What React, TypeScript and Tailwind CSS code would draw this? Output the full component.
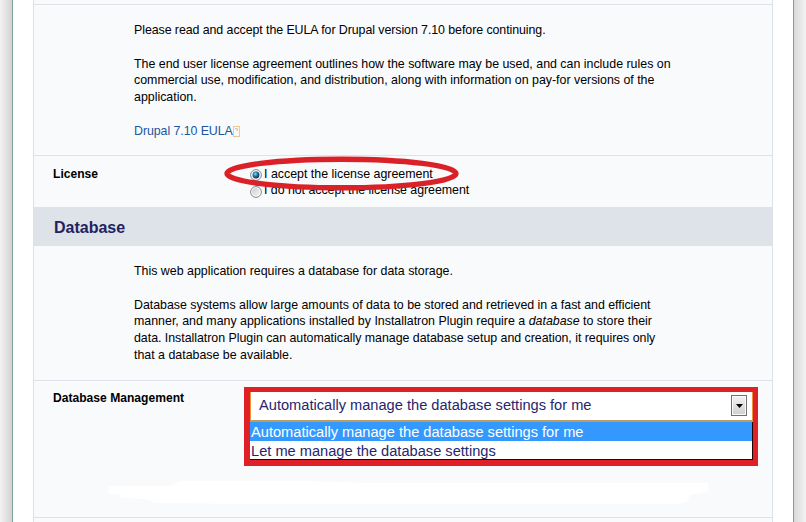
import type { ReactNode } from "react";

type TextLine = {
  text: ReactNode;
  className?: string;
};

const eulaLines: TextLine[] = [
  {
    text: "Please read and accept the EULA for Drupal version 7.10 before continuing.",
    className: "tracking-[-0.07px]",
  },
  { text: "" },
  { text: "The end user license agreement outlines how the software may be used, and can include rules on" },
  {
    text: "commercial use, modification, and distribution, along with information on pay-for versions of the",
    className: "tracking-[-0.01px]",
  },
  { text: "application." },
  { text: "" },
];

const databaseLines: TextLine[] = [
  { text: "This web application requires a database for data storage." },
  { text: "" },
  {
    text: "Database systems allow large amounts of data to be stored and retrieved in a fast and efficient",
    className: "tracking-[-0.02px]",
  },
  {
    text: (
      <>
        manner, and many applications installed by Installatron Plugin require a <em>database</em> to store their
      </>
    ),
  },
  {
    text: "data. Installatron Plugin can automatically manage database setup and creation, it requires only",
    className: "tracking-[-0.03px]",
  },
  { text: "that a database be available." },
];

function Copy({ lines, children }: { lines: TextLine[]; children?: ReactNode }) {
  return (
    <div className="pl-[100px] text-[12.4px] leading-[16.8px] whitespace-nowrap">
      {lines.map((line, index) => (
        <div key={index} className={`h-[16.8px] ${line.className ?? ""}`}>
          {line.text}
        </div>
      ))}
      {children}
    </div>
  );
}

function Radio({ checked }: { checked?: boolean }) {
  return (
    <svg width="12" height="12" viewBox="0 0 12 12" className="block shrink-0">
      <defs>
        <radialGradient id="dot" cx="40%" cy="35%" r="65%">
          <stop offset="0" stopColor="#8fd8f5" />
          <stop offset="0.5" stopColor="#1c78ad" />
          <stop offset="1" stopColor="#0a2f50" />
        </radialGradient>
        <linearGradient id="face" x1="0" y1="0" x2="1" y2="1">
          <stop offset="0" stopColor="#c9cbcd" />
          <stop offset="1" stopColor="#f8f8f8" />
        </linearGradient>
      </defs>
      <circle cx="6" cy="6" r="5.4" fill="#fdfdfd" stroke="#858789" />
      <circle cx="6" cy="6" r="3.9" fill="url(#face)" />
      {checked && <circle cx="6" cy="6" r="3.4" fill="url(#dot)" />}
    </svg>
  );
}

function LicenseOptions() {
  return (
    <div className="relative pt-[10px] text-[12.4px] leading-4 whitespace-nowrap">
      <div className="flex h-4">
        <span className="mt-[3px] mr-[2px]">
          <Radio checked />
        </span>
        I accept the license agreement
      </div>
      <div className="flex h-4 tracking-[-0.04px]">
        <span className="mt-[4px] mr-[2px]">
          <Radio />
        </span>
        I do not accept the license agreement
      </div>
      <svg className="absolute top-0 -left-[26px]" width="236" height="36" viewBox="0 0 236 36">
        <ellipse cx="117.5" cy="17.5" rx="114.5" ry="14.3" fill="none" stroke="#da2128" strokeWidth="5.4" />
      </svg>
    </div>
  );
}

function DatabaseSelect() {
  return (
    <div className="mt-[6px] flex h-[79px] w-[514px] flex-col border-[5px] border-b-[6px] border-l-[6px] border-[#df2027] text-[14.63px] whitespace-nowrap text-[#26266c]">
      <div className="flex h-[30px] shrink-0 items-start justify-between border-r border-b-2 border-l border-r-[#f0913c] border-b-[#bb9c63] border-l-[#f0913c] bg-white pr-[5px] pl-[8px]">
        <span className="leading-[27px]">Automatically manage the database settings for me</span>
        <span className="mt-[3px] flex h-[21px] w-4 items-center justify-center border border-[#707070] bg-gradient-to-b from-[#f3f3f3] to-[#cfcfcf] shadow-[inset_0_0_0_1px_#fafafa]">
          <svg width="7" height="4" viewBox="0 0 7 4">
            <path d="M0 0h7L3.5 4z" fill="#000" />
          </svg>
        </span>
      </div>
      <div className="grow border-r border-b border-[#210808] bg-white">
        <div className="h-[19px] bg-[#3399ff] pl-px leading-[20px] text-white">
          Automatically manage the database settings for me
        </div>
        <div className="h-[18px] pl-px leading-[20px]">Let me manage the database settings</div>
      </div>
    </div>
  );
}

export default function App() {
  return (
    <div className="flex h-[522px] w-[806px] overflow-hidden bg-white font-['Liberation_Sans',Arial,sans-serif] text-black">
      <div className="w-[13px] shrink-0 border-r border-[#7fa39b] bg-gradient-to-r from-[#f3f3f3] to-[#d2d2d2]" />
      <main className="grow px-5">
        <div className="h-[522px] border-x border-[#dde2e8] bg-[#f9fafc]">
          <div className="h-[5px] border-b border-[#dde2e8]" />

          <section className="h-[151px] border-b border-[#dde2e8] pt-[17px]">
            <Copy lines={eulaLines}>
              <div className="flex items-center tracking-[-0.07px] text-[#20569f]">
                Drupal 7.10 EULA
                <svg width="7" height="11" viewBox="0 0 7 11" fill="none" stroke="#efc891">
                  <rect x="0.5" y="0.5" width="6" height="10" />
                  <path d="M2 2.5h2.5V5M2.5 3l2 2" />
                </svg>
              </div>
            </Copy>
          </section>

          <section className="flex h-[51px] pl-[19px]">
            <h3 className="w-[197px] pt-[10px] text-[12.1px] leading-4 font-bold">License</h3>
            <LicenseOptions />
          </section>

          <h2 className="h-[39px] bg-[#dee2e9] pl-[20px] text-[16px] leading-[41px] font-bold text-[#22225e]">Database</h2>

          <section className="h-[135px] border-b border-[#dde2e8] pt-[17px]">
            <Copy lines={databaseLines} />
          </section>

          <section className="h-[137px] border-b border-[#dde2e8]">
            <div className="flex pl-[19px]">
              <h3 className="w-[191px] pt-[9px] text-[12.1px] leading-4 font-bold">Database Management</h3>
              <DatabaseSelect />
            </div>
            <svg className="mt-[14px] ml-[75px] block" width="600" height="24" viewBox="0 0 600 24">
              <path
                d="M0 6h60l12-5h130l60 2h337v9l-18 3-3 7-8 2H150L45 23l-4-3-30-3-1-3H0z"
                fill="#fff"
              />
            </svg>
          </section>
        </div>
      </main>
      <div className="w-[13px] shrink-0 border-l border-[#829caa] bg-gradient-to-r from-[#d8d8d8] to-[#f3f3f3]" />
    </div>
  );
}
